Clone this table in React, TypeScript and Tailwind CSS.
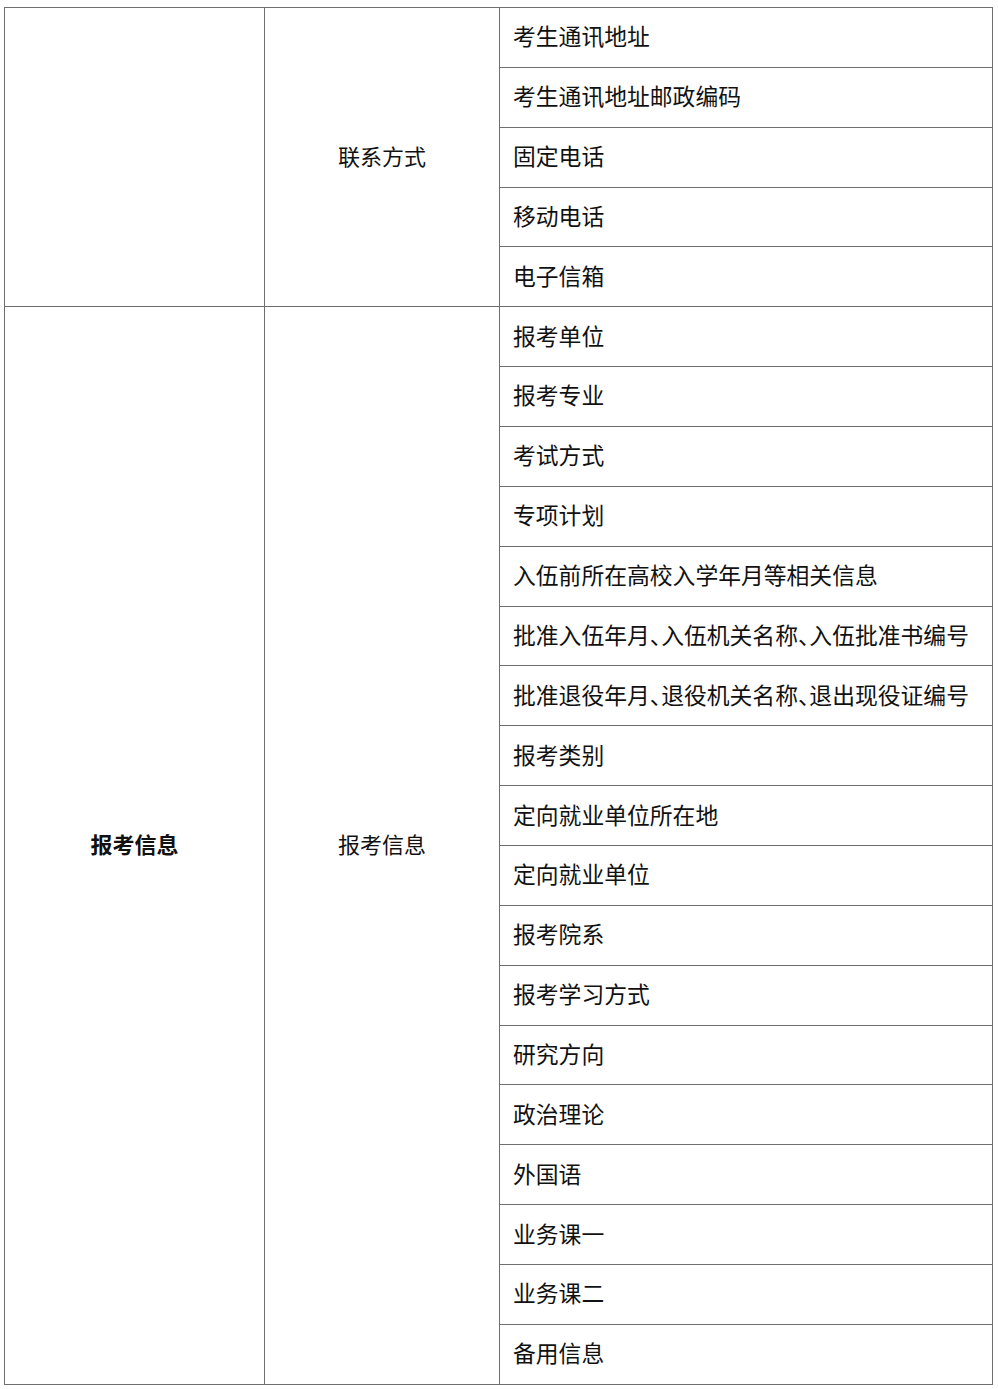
const contactItems = [
  "考生通讯地址",
  "考生通讯地址邮政编码",
  "固定电话",
  "移动电话",
  "电子信箱",
];

const applyItems = [
  "报考单位",
  "报考专业",
  "考试方式",
  "专项计划",
  "入伍前所在高校入学年月等相关信息",
  "批准入伍年月、入伍机关名称、入伍批准书编号",
  "批准退役年月、退役机关名称、退出现役证编号",
  "报考类别",
  "定向就业单位所在地",
  "定向就业单位",
  "报考院系",
  "报考学习方式",
  "研究方向",
  "政治理论",
  "外国语",
  "业务课一",
  "业务课二",
  "备用信息",
];

const Group = ({
  title,
  sub,
  items,
}: {
  title: string;
  sub: string;
  items: string[];
}) => {
  return (
    <div className="flex gap-px">
      <div className="w-[259px] bg-white flex items-center justify-center font-bold text-[22px]">
        {title}
      </div>
      <div className="w-[234px] bg-white flex items-center justify-center text-[22px]">
        {sub}
      </div>
      <div className="w-[492px] flex flex-col gap-px">
        {items.map((item) => (
          <div
            key={item}
            className="h-[58.87px] bg-white flex items-center pl-[13px] pt-[2px] text-[22.8px] whitespace-nowrap [font-feature-settings:'halt']"
          >
            {item}
          </div>
        ))}
      </div>
    </div>
  );
};

export default function App() {
  return (
    <div className="bg-white min-h-[1389px] w-[998px] pt-[7px] pl-[4px] text-[#111] font-['Liberation_Serif','Noto_Sans_CJK_SC',serif]">
      <div className="w-[989px] bg-[#6e6e6e] p-px flex flex-col gap-px">
        <Group title="" sub="联系方式" items={contactItems} />
        <Group title="报考信息" sub="报考信息" items={applyItems} />
      </div>
    </div>
  );
}
